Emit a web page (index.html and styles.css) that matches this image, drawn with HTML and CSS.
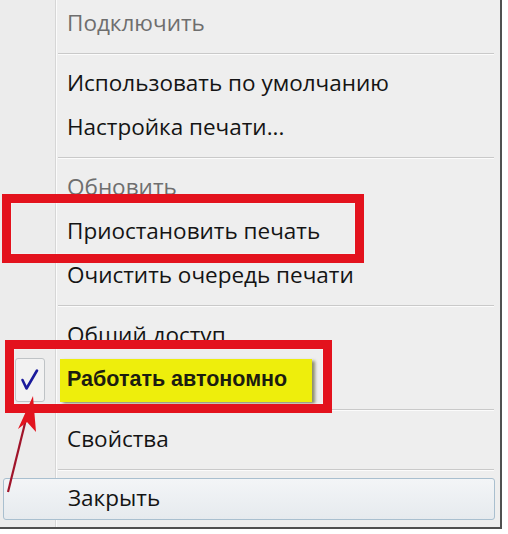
FILE: index.html
```html
<!DOCTYPE html>
<html lang="ru">
<head>
<meta charset="utf-8">
<link rel="stylesheet" href="styles.css">
</head>
<body>
<div class="page">
  <div class="menu">
    <div class="item disabled">Подключить</div>
    <div class="sep"></div>
    <div class="item">Использовать по умолчанию</div>
    <div class="item">Настройка печати...</div>
    <div class="sep"></div>
    <div class="item disabled">Обновить</div>
    <div class="item">Приостановить печать</div>
    <div class="item">Очистить очередь печати</div>
    <div class="sep"></div>
    <div class="item">Общий доступ</div>
    <div class="item checked">
      <span class="check">
        <svg width="20" height="24" viewBox="0 0 20 24"><path d="M2.5 12 L6.5 20.5 L17 2.5" fill="none" stroke="#1a1a9c" stroke-width="2.6" stroke-linecap="round" stroke-linejoin="round"/></svg>
      </span>
      <span class="mark">Работать автономно</span>
    </div>
    <div class="sep"></div>
    <div class="item">Свойства</div>
    <div class="sep"></div>
    <div class="item hover">Закрыть</div>
  </div>
  <div class="redbox box1"></div>
  <div class="redbox box2"></div>
  <svg class="arrow" width="60" height="120" viewBox="0 390 60 120">
    <line x1="8" y1="492" x2="27" y2="415" stroke="#a0142a" stroke-width="2.2"/>
    <polygon points="33,396 36,432 27,422 18,429" fill="#e2141f"/>
  </svg>
</div>
</body>
</html>
```
FILE: styles.css
```css
html, body {
  margin: 0;
  padding: 0;
  background: #ffffff;
}
.page {
  position: relative;
  width: 508px;
  height: 534px;
  overflow: hidden;
}
.menu {
  width: 500px;
  height: 525px;
  box-sizing: content-box;
  padding-top: 2px;
  border-right: 2px solid #505050;
  border-bottom: 2px solid #505050;
  background: linear-gradient(to right, #ececec 0, #ececec 55px, #d6d6d6 55px, #d6d6d6 56px, #fbfbfb 56px, #fbfbfb 57px, #eeeeee 57px);
  font-family: "Open Sans", "Noto Sans", sans-serif;
  font-size: 22.5px;
  color: #141414;
  display: flex;
  flex-direction: column;
}
.item {
  height: 44px;
  display: flex;
  align-items: center;
  padding-left: 67px;
  padding-bottom: 3px;
  box-sizing: border-box;
  white-space: nowrap;
}
.disabled {
  color: #6e6e6e;
}
.sep {
  height: 16px;
  margin-left: 58px;
  margin-right: 6px;
  display: flex;
  flex-direction: column;
  justify-content: center;
}
.sep::before {
  content: "";
  display: block;
  height: 1px;
  background: #c9c9c9;
  border-bottom: 1px solid #fbfbfb;
}
.checked {
  padding-left: 15px;
  padding-bottom: 0;
}
.check {
  width: 30px;
  height: 44px;
  box-sizing: border-box;
  border: 1px solid #bfc3c6;
  border-radius: 3px;
  background: #f2f2f2;
  display: flex;
  align-items: center;
  justify-content: center;
  margin-right: 15px;
}
.mark {
  height: 43px;
  display: flex;
  align-items: center;
  padding: 0 25px 2px 7px;
  box-sizing: border-box;
  background: #eeee0c;
  box-shadow: 3px 2px 3px rgba(60, 60, 0, 0.55);
  font-family: "Liberation Sans", Arial, sans-serif;
  font-weight: bold;
  font-size: 21.5px;
  color: #1c1c10;
}
.hover {
  margin: 0 5px 0 3px;
  padding-left: 64px;
  height: 42px;
  border: 1px solid #a9bfcf;
  border-radius: 3px;
  background: linear-gradient(to bottom, #f3f5f7, #e6eaee);
}
.redbox {
  position: absolute;
  border: 9px solid #e3121d;
  box-sizing: border-box;
  box-shadow: inset 0 0 2px rgba(255,255,255,0.9);
}
.box1 {
  left: 2px;
  top: 194px;
  width: 362px;
  height: 69px;
}
.box2 {
  left: 5px;
  top: 340px;
  width: 327px;
  height: 73px;
}
.arrow {
  position: absolute;
  left: 0;
  top: 390px;
}
```
